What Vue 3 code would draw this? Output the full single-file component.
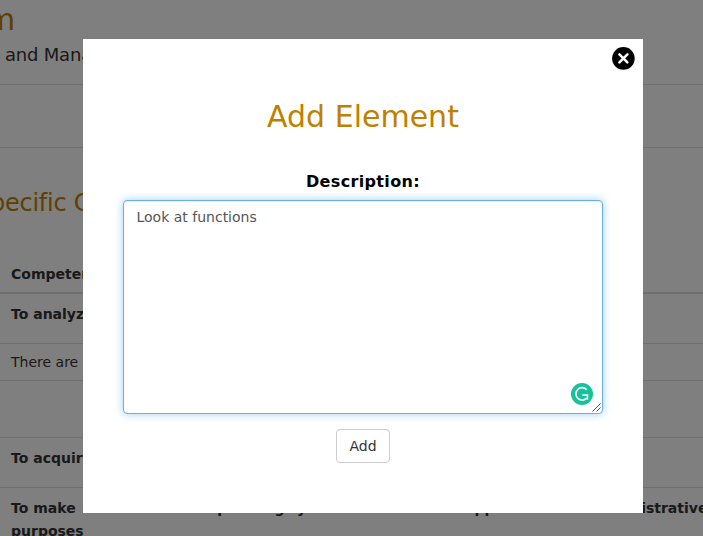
<script setup>
import { ref } from 'vue'

const description = ref('Look at functions')
const rows = [
  { text: 'To analyze and synthesize', bold: true, size: 'r50' },
  { text: 'There are', bold: false, size: 'r37' },
  { text: '', bold: false, size: 'r57' },
  { text: 'To acquire basic knowledge', bold: true, size: 'r50' },
  {
    lead: 'To make',
    text: ' effective use of operating systems and software applications for administrative',
    tail: 'purposes',
    bold: true,
    size: 'last',
  },
]
</script>

<template>
  <div class="screen">
    <main class="page">
      <header class="intro">
        <h1>m</h1>
        <p>and Management</p>
      </header>
      <div class="strip"></div>
      <h2>pecific Competences</h2>
      <section class="table">
        <div class="head">Competences</div>
        <div v-for="row in rows" :key="row.size + row.text" class="row" :class="[row.size, { bold: row.bold }]">
          <div><span v-if="row.lead" class="lead">{{ row.lead }}</span>{{ row.text }}</div>
          <div v-if="row.tail">{{ row.tail }}</div>
        </div>
      </section>
    </main>

    <div class="overlay">
      <div class="modal" role="dialog">
        <button class="close" aria-label="Close">
          <svg width="24" height="24" viewBox="0 0 24 24">
            <circle cx="12.4" cy="12.4" r="11.3" fill="#000" />
            <path d="M8.4 8.4l8 8M16.4 8.4l-8 8" stroke="#fff" stroke-width="2.5" stroke-linecap="round" />
          </svg>
        </button>
        <h3>Add Element</h3>
        <label for="description">Description:</label>
        <div class="field">
          <textarea id="description" v-model="description" spellcheck="false"></textarea>
          <svg class="checker" width="22" height="22" viewBox="0 0 22 22">
            <circle cx="11" cy="11" r="11" fill="#15c39a" />
            <path d="M15.6 6.6A6.2 6.2 0 1 0 15.4 15.4" fill="none" stroke="#fff" stroke-width="1.7" />
            <path d="M11.4 12.2h5v4.6" fill="none" stroke="#fff" stroke-width="1.7" />
          </svg>
          <svg class="grip" width="9" height="9" viewBox="0 0 9 9">
            <path d="M.5 8.5l8-8M4.5 8.5l4-4" stroke="#555" stroke-width="1" />
          </svg>
        </div>
        <button class="add">Add</button>
      </div>
    </div>
  </div>
</template>

<style>
body {
  margin: 0;
  overflow: hidden;
}
</style>

<style scoped>
* {
  box-sizing: border-box;
}
.screen {
  position: relative;
  width: 703px;
  height: 536px;
  overflow: hidden;
  background: #fff;
  color: #333;
  font: 14px/23px Verdana, "DejaVu Sans", sans-serif;
}
.page {
  white-space: nowrap;
}
h1, h2, h3, p {
  margin: 0;
  font-weight: 400;
}
h1, h2, h3 {
  color: #c08000;
}
.intro {
  height: 85px;
  border-bottom: 1px solid #ddd;
}
h1 {
  margin-left: -14px;
  padding-top: 2px;
  font-size: 30px;
  line-height: 36px;
}
.intro p {
  padding: 5px 0 0 5px;
  font-size: 18px;
  letter-spacing: -0.2px;
  line-height: 24px;
}
.strip {
  height: 63px;
  border-bottom: 1px solid #ddd;
}
h2 {
  height: 107px;
  margin-left: -10px;
  padding-top: 40px;
  font-size: 24px;
  letter-spacing: -0.25px;
  line-height: 30px;
}
.head {
  height: 39px;
  padding: 8px 11px 0;
  border-bottom: 2px solid #ddd;
  font-weight: 700;
}
.row {
  padding: 9px 11px 0;
  border-bottom: 1px solid #ddd;
}
.bold {
  font-weight: 700;
}
.r50 {
  height: 50px;
}
.r37 {
  height: 37px;
  padding-top: 7px;
}
.r57 {
  height: 57px;
}
.last {
  word-spacing: -0.7px;
}
.lead {
  margin-right: 3px;
  word-spacing: 0;
}
.overlay {
  position: absolute;
  inset: 0;
  padding: 39px 60px 23px 83px;
  background: rgba(0, 0, 0, 0.5);
}
.modal {
  position: relative;
  display: flex;
  flex-direction: column;
  align-items: center;
  height: 474px;
  padding: 60px 40px 0;
  background: #fff;
}
.close {
  position: absolute;
  top: 7px;
  right: 8px;
  width: 24px;
  height: 24px;
  padding: 0;
  border: 0;
  background: none;
}
.close svg {
  display: block;
}
h3 {
  font-size: 30px;
  line-height: 36px;
}
label {
  margin-top: 35px;
  color: #000;
  font-size: 16px;
  font-weight: 700;
  letter-spacing: 0.35px;
  line-height: 24px;
}
.field {
  position: relative;
  width: 480px;
  height: 214px;
  margin-top: 6px;
}
textarea {
  display: block;
  width: 100%;
  height: 100%;
  padding: 6px 12px 6px 12.5px;
  border: 1px solid #66afe9;
  border-radius: 4px;
  outline: 0;
  background: #fff;
  box-shadow: inset 0 1px 1px rgba(0, 0, 0, 0.075), 0 0 8px rgba(102, 175, 233, 0.6);
  color: #555;
  font: 14px/20px Verdana, "DejaVu Sans", sans-serif;
  resize: none;
}
.checker {
  position: absolute;
  right: 10px;
  bottom: 9px;
}
.grip {
  position: absolute;
  right: 2px;
  bottom: 2px;
}
.add {
  width: 54px;
  height: 34px;
  margin-top: 15px;
  padding: 0;
  border: 1px solid #ccc;
  border-radius: 4px;
  background: #fff;
  color: #333;
  font: 14px/20px Verdana, "DejaVu Sans", sans-serif;
}
</style>
